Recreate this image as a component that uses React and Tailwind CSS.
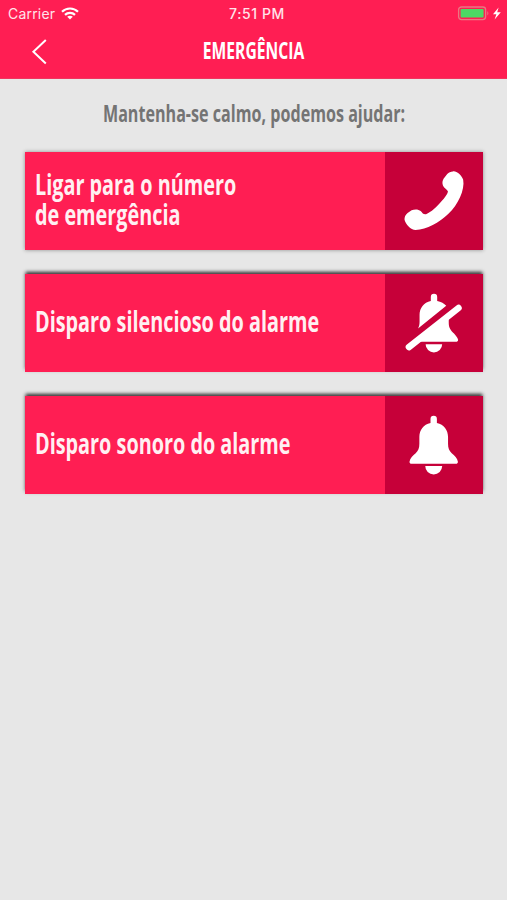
import React from 'react';

const PhoneIcon = () => (
  <svg className="block w-full h-full" viewBox="0 0 98 98" fill="#fff">
    <path d="M68 19.5 C71.5 18.8 76.5 23 78.3 27.8 C80.2 38 73 53 63.5 62 C54 71 42 78 30.5 78.3 C25.5 78.3 20.6 72.5 19.4 68 C19.2 65.5 20.3 63 22.5 61.2 L26.5 58.6 C29.5 57.2 33.5 57.4 35.6 59.3 C37.2 60.8 37.8 62.8 41 62.5 C46 60.5 52 55 56.5 49.5 C59.8 45.8 62.5 42 63 39.8 C63 38.2 59.2 36.6 58 33.6 C57.2 31.2 57.3 29 58.6 26.8 L62.3 22.2 C63.8 20.5 65.8 19.6 68 19.5 Z" />
  </svg>
);

const BellIcon = () => (
  <svg className="block w-full h-full" viewBox="0 0 98 98" fill="#fff">
    <path d="M45.5 27 V23 A3.2 3.2 0 0 1 51.9 23 V27 C59 28.6 63.1 34 63.1 41 V48 C63.1 52.5 64.2 55 66.8 57.6 C69.5 60 72.6 62.5 73 66 C73 67.4 72.2 68 71 68 H26.4 C25.2 68 24.4 67.4 24.4 66 C24.8 62.5 27.9 60 30.6 57.6 C33.2 55 34.3 52.5 34.3 48 V41 C34.3 34 38.4 28.6 45.5 27 Z" />
    <path d="M40.2 70.3 H57.2 A8.5 8.5 0 0 1 40.2 70.3 Z" />
  </svg>
);

const BellOffIcon = () => (
  <svg className="block w-full h-full" viewBox="0 0 98 98" fill="#fff">
    <path d="M45.8 27 V23 A3.2 3.2 0 0 1 52.2 23 V27 C56 27.8 59.3 29.4 61.3 31.9 L33 54.8 C34.2 52.5 34.5 50.5 34.5 48 V41 C34.5 34 38.7 28.6 45.8 27 Z" />
    <path d="M63.8 42 V48 C63.8 52.5 64.4 54.5 66.8 57.4 C70 60.5 73 64 73.2 66 C73.2 67.4 72.4 68 71 68 H34 Z" />
    <path d="M40.6 70.5 H57.2 A8.3 8.3 0 0 1 40.6 70.5 Z" />
    <path d="M73.6 34.1 L23.8 73.4" stroke="#fff" strokeWidth="6.5" strokeLinecap="round" />
  </svg>
);

const actions = [
  {
    id: 'call',
    lines: ['Ligar para o número', 'de emergência'],
    icon: <PhoneIcon />,
    shadow: 'shadow-[0_0_4px_rgba(0,0,0,0.4)]',
  },
  {
    id: 'silent',
    lines: ['Disparo silencioso do alarme'],
    icon: <BellOffIcon />,
    shadow: 'shadow-[0_-3px_3px_-1px_rgba(0,0,0,0.6),0_-2px_4px_rgba(0,0,0,0.35)]',
  },
  {
    id: 'sound',
    lines: ['Disparo sonoro do alarme'],
    icon: <BellIcon />,
    shadow: 'shadow-[0_-3px_3px_-1px_rgba(0,0,0,0.6),0_-2px_4px_rgba(0,0,0,0.35)]',
  },
];

export default function App() {
  return (
    <div className="w-full h-screen bg-[#e7e7e7] font-['Open_Sans',sans-serif] overflow-hidden">
      {/* Header */}
      <header className="h-[79px] bg-[#ff1e53] text-white border-b border-[#f0365f]">
        {/* Status bar */}
        <div className="grid grid-cols-3 items-center h-[27px] pl-2 pr-1 font-['Inter',sans-serif] text-[14px] text-[#ffe3ea]">
          <div className="flex items-center gap-[6px]">
            <span className="tracking-[0.2px]">Carrier</span>
            <svg width="18" height="13" viewBox="0 0 18 13" fill="none" stroke="#fff" strokeWidth="2.2">
              <path d="M1 4.7 C5.4 0.4 12.6 0.4 17 4.7" />
              <path d="M4 7.9 C6.8 5.2 11.2 5.2 14 7.9" />
              <path d="M9 12.6 L6.2 9.8 C7.8 8.4 10.2 8.4 11.8 9.8 Z" fill="#fff" stroke="none" />
            </svg>
          </div>
          <span className="pl-[3px] text-center font-medium text-[14px] tracking-[0.6px]">7:51 PM</span>
          <svg className="justify-self-end" width="46" height="15" viewBox="0 0 46 15">
            <rect x="1.6" y="1" width="27" height="12.6" rx="2.8" fill="none" stroke="#e97882" strokeWidth="1.3" />
            <rect x="3.6" y="3" width="23" height="8.6" rx="0.8" fill="#4cd964" />
            <path d="M30.3 5 Q32.5 7.3 30.3 9.6 Z" fill="#e97882" />
            <path d="M41.6 1.5 L36 8.2 H39.4 L37.6 13.6 L43.8 6.3 H40.2 Z" fill="#fff" />
          </svg>
        </div>

        {/* Title bar */}
        <div className="grid grid-cols-[80px_1fr_80px] items-center h-[48px]">
          <button className="pl-[31px] pt-px" aria-label="Voltar">
            <svg width="17" height="26" viewBox="0 0 17 26" fill="none" stroke="#fff" strokeWidth="2">
              <path d="M14.8 1 L2.4 12.7 L14.8 24.4" />
            </svg>
          </button>
          <h1 className="flex justify-center pb-[2px] pl-px whitespace-nowrap text-[23px] leading-[30px] font-bold">
            <span className="inline-block scale-x-[0.68]">EMERGÊNCIA</span>
          </h1>
        </div>
      </header>

      <main className="pl-[25px] pr-[24px]">
        <p className="flex justify-center h-[73.4px] pt-[20px] whitespace-nowrap text-[22.5px] leading-[30px] font-bold text-[#747474]">
          <span className="inline-block scale-x-[0.716]">Mantenha-se calmo, podemos ajudar:</span>
        </p>

        {/* Actions */}
        <div className="flex flex-col gap-[24.4px]">
          {actions.map((action) => (
            <button
              key={action.id}
              className={`flex items-center w-full h-[97.6px] bg-[#ff1e53] text-left ${action.shadow}`}
            >
              <div className="w-[360px] pl-[10px] pb-[4px] whitespace-nowrap text-[28px] leading-[30px] font-bold text-[#fff0f2]">
                {action.lines.map((line) => (
                  <div key={line}>
                    <span className="inline-block origin-left scale-x-[0.708]">{line}</span>
                  </div>
                ))}
              </div>
              <div className="w-[98px] h-full bg-[#c60039]">{action.icon}</div>
            </button>
          ))}
        </div>
      </main>
    </div>
  );
}
